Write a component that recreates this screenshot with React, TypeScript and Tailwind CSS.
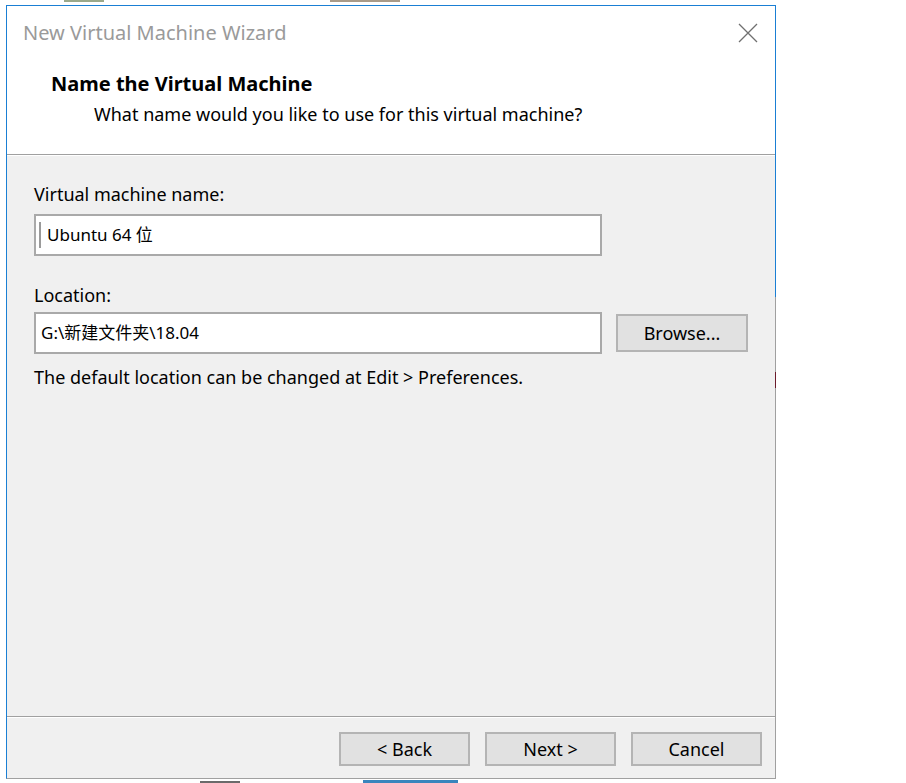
const fieldClass = "flex h-[42px] w-[568px] items-center border-2 border-[#a9a9a9] bg-white text-[17px] text-black"
const buttonClass = "flex h-[34px] w-[131px] items-center justify-center border-2 border-[#b4b4b4] bg-[#e1e1e1] text-[18px] text-black"

export default function App() {
    return (
        <div className="flex min-h-screen w-full flex-col bg-white font-['Noto_Sans','Noto_Sans_CJK_SC',sans-serif]">
            <div className="flex h-[5px] w-full">
                <div className="ml-[64px] h-[2px] w-[40px] bg-[#9aa88a]" />
                <div className="ml-[226px] h-[2px] w-[70px] bg-[#a89a88]" />
            </div>
            <div className="pl-[6px]">
                <WizardDialog />
            </div>
            <div className="flex h-[5px] w-full">
                <div className="ml-[200px] mt-[2px] h-[2px] w-[40px] bg-[#6a6a6a]" />
                <div className="ml-[123px] mt-[1px] h-[3px] w-[95px] bg-[#3a85bd]" />
            </div>
        </div>
    )
}

function CloseIcon() {
    return (
        <svg width="22" height="22" viewBox="0 0 22 22" className="mt-[4px]">
            <path d="M2 2 L20 20 M20 2 L2 20" stroke="#707070" strokeWidth="1.3" fill="none" />
        </svg>
    )
}

function WizardDialog() {
    return (
        <div className="flex h-[774px] w-[770px] border-t border-l border-b border-t-[#1a7fd4] border-l-[#1a7fd4] border-b-[#a0a0a0]">
            <div className="flex flex-1 flex-col">
                <header className="flex h-[148px] flex-col bg-white">
                    <div className="flex items-start justify-between pl-[16px] pr-[16px] pt-[12px]">
                        <span className="text-[20px] leading-[30px] text-[#9a9a9a]">New Virtual Machine Wizard</span>
                        <CloseIcon />
                    </div>
                    <div className="pl-[44px] pt-[22px] text-[20px] font-bold leading-[28px] text-black">Name the Virtual Machine</div>
                    <div className="pl-[87px] pt-[4px] text-[18px] leading-[24px] text-black">What name would you like to use for this virtual machine?</div>
                </header>
                <div className="h-px bg-[#a0a0a0]" />
                <div className="h-px bg-white" />

                <main className="flex flex-1 flex-col bg-[#f0f0f0] px-[27px] pt-[26px]">
                    <label className="text-[18px] leading-[24px] text-black">Virtual machine name:</label>
                    <div className={`${fieldClass} mt-[8px]`}>
                        <span className="ml-[3px] h-[26px] w-[2px] bg-[#9a9a9a]" />
                        <span className="pl-[6px]">Ubuntu 64 位</span>
                    </div>

                    <label className="mt-[27px] text-[18px] leading-[24px] text-black">Location:</label>
                    <div className="mt-[5px] flex items-center gap-[14px]">
                        <div className={fieldClass}>
                            <span className="pl-[5px]">G:\新建文件夹\18.04</span>
                        </div>
                        <button className="flex h-[38px] w-[132px] items-center justify-center border-2 border-[#b4b4b4] bg-[#e1e1e1] text-[18px] text-black">
                            Browse...
                        </button>
                    </div>
                    <p className="mt-[11px] text-[18px] leading-[24px] text-black">The default location can be changed at Edit &gt; Preferences.</p>
                </main>

                <div className="h-px bg-[#a0a0a0]" />
                <div className="h-px bg-white" />
                <footer className="flex h-[60px] justify-end gap-[15px] bg-[#f0f0f0] pr-[13px] pt-[14px]">
                    <button className={buttonClass}>&lt; Back</button>
                    <button className={buttonClass}>Next &gt;</button>
                    <button className={buttonClass}>Cancel</button>
                </footer>
            </div>
            <div className="w-px bg-[linear-gradient(to_bottom,#1a7fd4_0,#1a7fd4_291px,#a0a0a0_291px,#a0a0a0_366px,#6b1b2b_366px,#6b1b2b_382px,#a0a0a0_382px)]" />
        </div>
    )
}
